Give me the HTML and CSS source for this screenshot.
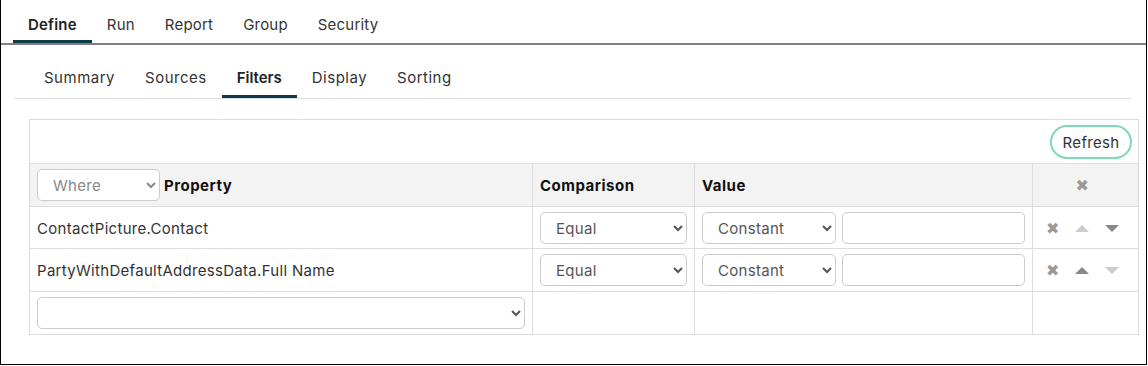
FILE: index.html
```html
<!DOCTYPE html>
<html lang="en">
<head>
    <meta charset="UTF-8">
    <title>Filters</title>
    <link rel="stylesheet" href="styles.css">
</head>
<body>
<div class="frame">
    <!-- Main tabs -->
    <div class="main-tabs">
        <div class="tab active">Define</div>
        <div class="tab">Run</div>
        <div class="tab">Report</div>
        <div class="tab">Group</div>
        <div class="tab">Security</div>
    </div>

    <!-- Sub tabs -->
    <div class="sub-tabs">
        <div class="sub-tab">Summary</div>
        <div class="sub-tab">Sources</div>
        <div class="sub-tab active">Filters</div>
        <div class="sub-tab">Display</div>
        <div class="sub-tab">Sorting</div>
    </div>

    <table class="filters">
        <colgroup>
            <col class="c-prop">
            <col class="c-comp">
            <col class="c-val">
            <col class="c-act">
        </colgroup>
        <tr class="toolbar">
            <td colspan="4"><button class="refresh">Refresh</button></td>
        </tr>
        <tr class="head">
            <th>
                <div class="prop-head">
                    <select class="sel where"><option>Where</option></select>
                    <span>Property</span>
                </div>
            </th>
            <th>Comparison</th>
            <th>Value</th>
            <th class="actions"><span class="icon-x">&#10006;</span></th>
        </tr>
        <tr class="first">
            <td class="prop">ContactPicture.Contact</td>
            <td><select class="sel equal"><option>Equal</option></select></td>
            <td>
                <div class="value">
                    <select class="sel constant"><option>Constant</option></select>
                    <input class="text" type="text">
                </div>
            </td>
            <td class="actions">
                <span class="icon-x">&#10006;</span>
                <span class="arrow up off"></span>
                <span class="arrow down"></span>
            </td>
        </tr>
        <tr>
            <td class="prop">PartyWithDefaultAddressData.Full Name</td>
            <td><select class="sel equal"><option>Equal</option></select></td>
            <td>
                <div class="value">
                    <select class="sel constant"><option>Constant</option></select>
                    <input class="text" type="text">
                </div>
            </td>
            <td class="actions">
                <span class="icon-x">&#10006;</span>
                <span class="arrow up"></span>
                <span class="arrow down off"></span>
            </td>
        </tr>
        <tr>
            <td><select class="sel wide"><option></option></select></td>
            <td></td>
            <td></td>
            <td></td>
        </tr>
    </table>
</div>
</body>
</html>
```

FILE: styles.css
```css
body {
    margin: 0;
    font-family: Inter, "Open Sans", sans-serif;
    color: #333;
    background: #fff;
}
.frame {
    width: 1147px;
    height: 365px;
    box-sizing: border-box;
    border: 1px solid #000;
    border-top: none;
}
.main-tabs {
    display: flex;
    padding-left: 12px;
    border-bottom: 2px solid #808080;
}
.tab {
    padding: 14px 15px 4px;
    line-height: 22px;
    font-size: 15px;
    letter-spacing: 0.2px;
    border-bottom: 3px solid transparent;
}
.tab.active {
    font-weight: 600;
    color: #222;
    border-bottom-color: #0d3b4b;
}
.sub-tabs {
    display: flex;
    margin: 22px 15px 0 13px;
    padding-left: 15px;
    border-bottom: 1px solid #ddd;
}
.sub-tab {
    padding: 0 15px 6px;
    line-height: 22px;
    font-size: 15px;
    letter-spacing: 0.5px;
    border-bottom: 3px solid transparent;
}
.sub-tab.active {
    font-weight: 600;
    color: #222;
    letter-spacing: 0;
    border-bottom-color: #0d3b4b;
}
.filters {
    margin: 20px 0 0 28px;
    width: 1110px;
    border-collapse: collapse;
    table-layout: fixed;
    font-size: 15px;
    letter-spacing: 0.3px;
}
.c-prop { width: 503px; }
.c-comp { width: 162px; }
.c-val { width: 338px; }
.c-act { width: 106px; }
.filters td,
.filters th {
    border: 1px solid #ddd;
    padding: 5px 7px;
    height: 32px;
    text-align: left;
    vertical-align: middle;
}
.filters .first td {
    padding-bottom: 4px;
}
.toolbar td {
    text-align: right;
    padding: 5px 6px 4px;
}
.refresh {
    font-family: inherit;
    font-size: 15px;
    letter-spacing: 0.3px;
    color: #333;
    background: #fff;
    border: 2px solid #7fd8b6;
    border-radius: 17px;
    height: 34px;
    width: 82px;
    padding: 0;
    cursor: pointer;
}
.head th {
    background: #f3f3f3;
    font-weight: 700;
    color: #111;
    letter-spacing: 0.5px;
}
.prop-head {
    display: flex;
    align-items: center;
    gap: 4px;
}
.sel {
    font-family: inherit;
    font-size: 15px;
    letter-spacing: 0.3px;
    color: #555;
    height: 32px;
    padding: 0 6px 0 11px;
    border: 1px solid #ccc;
    border-radius: 5px;
    background: #fff;
    vertical-align: middle;
}
.where {
    width: 123px;
    color: #888;
    font-weight: 400;
}
.equal {
    width: 147px;
}
.constant {
    width: 134px;
}
.wide {
    width: 488px;
}
.value {
    display: flex;
    gap: 6px;
}
.text {
    flex: 1;
    min-width: 0;
    height: 32px;
    box-sizing: border-box;
    border: 1px solid #ccc;
    border-radius: 5px;
}
.prop {
    color: #333;
}
.filters .actions {
    text-align: center;
    white-space: nowrap;
    padding-right: 13px;
}
.icon-x {
    display: inline-block;
    color: #999;
    font-size: 16px;
    font-family: "DejaVu Sans", sans-serif;
    vertical-align: middle;
}
.arrow {
    display: inline-block;
    width: 0;
    height: 0;
    border-left: 7px solid transparent;
    border-right: 7px solid transparent;
    margin-left: 11px;
    vertical-align: middle;
}
.arrow.up {
    border-bottom: 7px solid #888;
}
.arrow.down {
    border-top: 7px solid #888;
}
.arrow.up.off {
    border-bottom-color: #ccc;
}
.arrow.down.off {
    border-top-color: #ccc;
}
```
